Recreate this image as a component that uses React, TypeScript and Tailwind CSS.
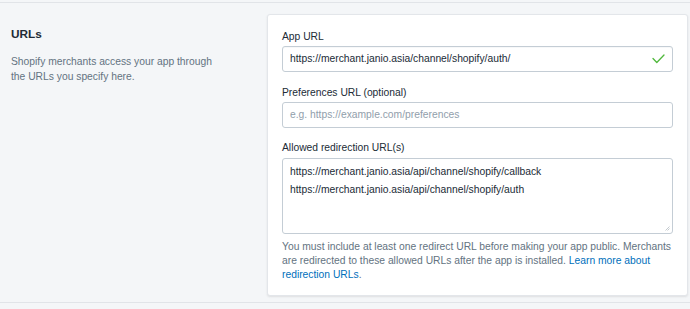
import React from 'react';

const font = { fontFamily: '"Liberation Sans", Arial, sans-serif' };

function CheckIcon() {
    return (
        <svg width="13" height="10" viewBox="0 0 13 10" fill="none" className="shrink-0">
            <path d="M1 4.5 L4.8 8.5 L12 1" stroke="#50b83c" strokeWidth="1.3" strokeLinecap="round" strokeLinejoin="round" />
        </svg>
    );
}

export default function App() {
    return (
        <div className="w-[690px] h-[309px] bg-[#f4f6f8] overflow-hidden text-[#212b36]" style={font}>
            <div className="h-[3px] border-b border-[#e1e4e8]" />

            <div className="flex pl-[11px] pr-[2px] pt-[11px] pb-[6px] border-b border-[#e1e4e8]">
                {/* left annotation */}
                <div className="w-[256px] pt-[12px]">
                    <h2 className="text-[11.8px] leading-[16px] font-semibold">URLs</h2>
                    <p className="mt-[12px] w-[205px] text-[10.3px] leading-[15px] text-[#637381]">
                        Shopify merchants access your app through the URLs you specify here.
                    </p>
                </div>

                {/* card */}
                <div className="flex-1 bg-white rounded-[3px] border border-[#e3e6ea] shadow-[0_1px_2px_rgba(63,63,68,0.12)] px-[14px] pt-[15px] pb-[13px]">
                    <label className="block text-[10.3px] leading-[14px] mb-[2px]">App URL</label>
                    <div className="flex items-center h-[26px] border border-[#c4cdd5] rounded-[3px] pl-[7px] pr-[7px] shadow-[inset_0_1px_0_rgba(99,115,129,0.05)]">
                        <span className="flex-1 text-[10.3px]">https://merchant.janio.asia/channel/shopify/auth/</span>
                        <CheckIcon />
                    </div>

                    <label className="block mt-[14px] text-[10.3px] leading-[14px] mb-[2px]">Preferences URL (optional)</label>
                    <div className="flex items-center h-[26px] border border-[#c4cdd5] rounded-[3px] pl-[7px] pr-[7px]">
                        <span className="text-[10.3px] text-[#919eab]">e.g. https://example.com/preferences</span>
                    </div>

                    <label className="block mt-[13px] text-[10.3px] leading-[14px] mb-[3px]">Allowed redirection URL(s)</label>
                    <div className="relative h-[76px] border border-[#c4cdd5] rounded-[3px] pl-[7px] pt-[4px] text-[10.3px] leading-[17.5px]">
                        <div>https://merchant.janio.asia/api/channel/shopify/callback</div>
                        <div>https://merchant.janio.asia/api/channel/shopify/auth</div>
                        <svg width="5" height="5" viewBox="0 0 5 5" className="absolute right-[2px] bottom-[2px]">
                            <path d="M0.5 4.5 L4.5 0.5 M2.5 4.5 L4.5 2.5" stroke="#b5bcc3" strokeWidth="0.8" />
                        </svg>
                    </div>

                    <p className="mt-[6px] text-[10.3px] leading-[14px] text-[#637381]">
                        You must include at least one redirect URL before making your app public. Merchants are redirected to these allowed URLs after the app is installed.{' '}
                        <a className="text-[#006fbb]">Learn more about redirection URLs</a>.
                    </p>
                </div>
            </div>
        </div>
    );
}
